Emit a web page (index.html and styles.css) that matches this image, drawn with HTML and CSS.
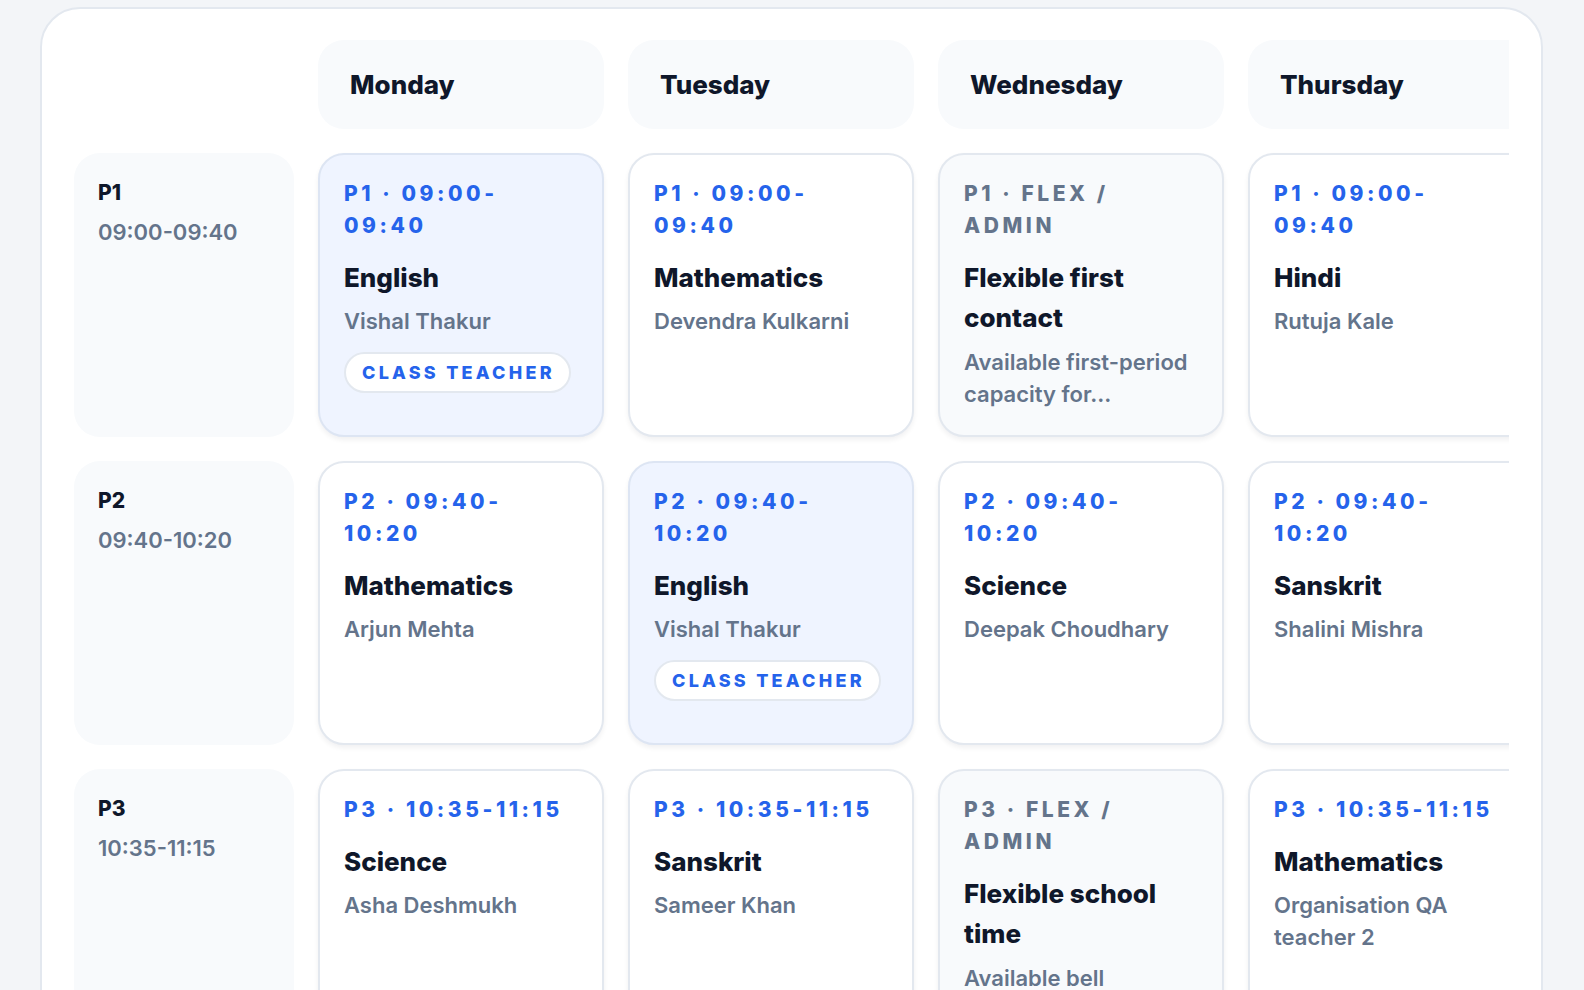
FILE: index.html
```html
<!DOCTYPE html>
<html lang="en">
<head>
<meta charset="utf-8">
<title>Timetable</title>
<link rel="stylesheet" href="styles.css">
</head>
<body>
<div class="board">
  <div class="scroller">
    <div class="grid">
      <div class="corner"></div>
      <div class="day">Monday</div>
      <div class="day">Tuesday</div>
      <div class="day">Wednesday</div>
      <div class="day">Thursday</div>
      <div class="day">Friday</div>

      <div class="period"><div class="p-name">P1</div><div class="p-time">09:00-09:40</div></div>
      <div class="slot mine"><div class="label">P1 · 09:00-09:40</div><div class="subject">English</div><div class="teacher">Vishal Thakur</div><span class="badge">Class teacher</span></div>
      <div class="slot"><div class="label">P1 · 09:00-09:40</div><div class="subject">Mathematics</div><div class="teacher">Devendra Kulkarni</div></div>
      <div class="slot flex"><div class="label">P1 · Flex / Admin</div><div class="subject">Flexible first contact</div><div class="desc">Available first-period capacity for…</div></div>
      <div class="slot"><div class="label">P1 · 09:00-09:40</div><div class="subject">Hindi</div><div class="teacher">Rutuja Kale</div></div>
      <div class="slot"><div class="label">P1 · 09:00-09:40</div><div class="subject">Science</div><div class="teacher">Asha Deshmukh</div></div>

      <div class="period"><div class="p-name">P2</div><div class="p-time">09:40-10:20</div></div>
      <div class="slot"><div class="label">P2 · 09:40-10:20</div><div class="subject">Mathematics</div><div class="teacher">Arjun Mehta</div></div>
      <div class="slot mine"><div class="label">P2 · 09:40-10:20</div><div class="subject">English</div><div class="teacher">Vishal Thakur</div><span class="badge">Class teacher</span></div>
      <div class="slot"><div class="label">P2 · 09:40-10:20</div><div class="subject">Science</div><div class="teacher">Deepak Choudhary</div></div>
      <div class="slot"><div class="label">P2 · 09:40-10:20</div><div class="subject">Sanskrit</div><div class="teacher">Shalini Mishra</div></div>
      <div class="slot"><div class="label">P2 · 09:40-10:20</div><div class="subject">Hindi</div><div class="teacher">Rutuja Kale</div></div>

      <div class="period"><div class="p-name">P3</div><div class="p-time">10:35-11:15</div></div>
      <div class="slot"><div class="label">P3 · 10:35-11:15</div><div class="subject">Science</div><div class="teacher">Asha Deshmukh</div></div>
      <div class="slot"><div class="label">P3 · 10:35-11:15</div><div class="subject">Sanskrit</div><div class="teacher">Sameer Khan</div></div>
      <div class="slot flex"><div class="label">P3 · Flex / Admin</div><div class="subject">Flexible school time</div><div class="desc">Available bell schedule capacity for…</div></div>
      <div class="slot"><div class="label">P3 · 10:35-11:15</div><div class="subject">Mathematics</div><div class="teacher">Organisation QA teacher 2</div></div>
      <div class="slot"><div class="label">P3 · 10:35-11:15</div><div class="subject">English</div><div class="teacher">Vishal Thakur</div></div>
    </div>
  </div>
</div>
</body>
</html>
```

FILE: styles.css
```css
* { box-sizing: border-box; }

html, body {
  margin: 0;
  padding: 0;
  height: 100%;
  overflow: hidden;
}

body {
  background: #f3f5f8;
  font-family: "Inter", "Liberation Sans", sans-serif;
  color: #0f172a;
}

.board {
  margin: 7px 0 0 40px;
  width: 1503px;
  min-height: 1200px;
  background: #ffffff;
  border: 2px solid #e3e8ef;
  border-radius: 40px;
  padding: 31px 32px;
}

.scroller {
  overflow: hidden;
}

.grid {
  display: grid;
  grid-template-columns: 220px repeat(5, 286px);
  grid-template-rows: 89px;
  grid-auto-rows: minmax(284px, auto);
  gap: 24px;
  width: max-content;
}

.day {
  background: #f8fafc;
  border-radius: 26px;
  display: flex;
  align-items: center;
  padding: 0 32px;
  font-size: 26px;
  font-weight: 800;
  color: #0f172a;
}

.period {
  background: #f8fafc;
  border-radius: 26px;
  padding: 26px 24px;
}

.p-name {
  font-size: 21px;
  font-weight: 800;
  line-height: 28px;
  color: #0f172a;
}

.p-time {
  margin-top: 10px;
  font-size: 22px;
  font-weight: 600;
  line-height: 30px;
  color: #64748b;
}

.slot {
  background: #ffffff;
  border: 2px solid #e3e8ef;
  border-radius: 26px;
  padding: 23px 25px 22px 24px;
  box-shadow: 0 3px 5px rgba(15, 23, 42, 0.06);
  display: flex;
  flex-direction: column;
  align-items: flex-start;
}

.slot.mine {
  background: #eff4ff;
  border-color: #dde5f3;
}

.slot.flex {
  background: #f8fafc;
}

.label {
  font-size: 21px;
  font-weight: 800;
  line-height: 32px;
  letter-spacing: 0.17em;
  text-transform: uppercase;
  color: #2563eb;
}

.slot.flex .label {
  color: #64748b;
}

.subject {
  margin-top: 16px;
  font-size: 26px;
  font-weight: 800;
  line-height: 40px;
  color: #0f172a;
}

.teacher {
  margin-top: 7px;
  font-size: 22px;
  font-weight: 600;
  line-height: 32px;
  color: #64748b;
}

.desc {
  margin-top: 8px;
  font-size: 22px;
  font-weight: 600;
  line-height: 32px;
  color: #64748b;
}

.badge {
  margin-top: 15px;
  height: 41px;
  display: inline-flex;
  align-items: center;
  padding: 0 14px 0 16px;
  background: #ffffff;
  border: 2px solid #e3e8ef;
  border-radius: 21px;
  font-size: 18px;
  font-weight: 800;
  letter-spacing: 0.18em;
  text-transform: uppercase;
  color: #2563eb;
}
```
